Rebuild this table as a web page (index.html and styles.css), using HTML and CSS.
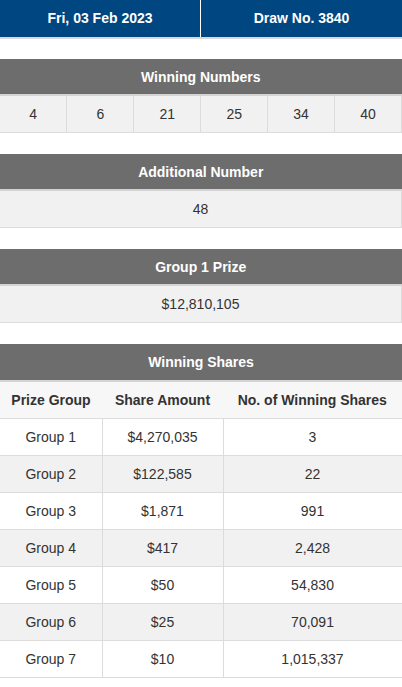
FILE: index.html
```html
<!DOCTYPE html>
<html>
<head>
<meta charset="utf-8">
<link rel="stylesheet" href="styles.css">
</head>
<body>
<div class="drawbar">
  <div class="drawcell">Fri, 03 Feb 2023</div>
  <div class="drawcell">Draw No. 3840</div>
</div>

<table class="tbl first">
  <thead><tr><th colspan="6" class="sec">Winning Numbers</th></tr></thead>
  <tbody>
    <tr class="grey">
      <td class="num">4</td><td class="num">6</td><td class="num">21</td><td class="num">25</td><td class="num">34</td><td class="num">40</td>
    </tr>
  </tbody>
</table>

<table class="tbl">
  <thead><tr><th class="sec">Additional Number</th></tr></thead>
  <tbody><tr class="grey"><td>48</td></tr></tbody>
</table>

<table class="tbl">
  <thead><tr><th class="sec">Group 1 Prize</th></tr></thead>
  <tbody><tr class="grey"><td>$12,810,105</td></tr></tbody>
</table>

<table class="tbl shares">
  <colgroup><col class="c1"><col class="c2"><col class="c3"></colgroup>
  <thead>
    <tr><th colspan="3" class="sec">Winning Shares</th></tr>
    <tr class="colhead"><th>Prize Group</th><th>Share Amount</th><th>No. of Winning Shares</th></tr>
  </thead>
  <tbody>
    <tr><td>Group 1</td><td>$4,270,035</td><td>3</td></tr>
    <tr class="grey"><td>Group 2</td><td>$122,585</td><td>22</td></tr>
    <tr><td>Group 3</td><td>$1,871</td><td>991</td></tr>
    <tr class="grey"><td>Group 4</td><td>$417</td><td>2,428</td></tr>
    <tr><td>Group 5</td><td>$50</td><td>54,830</td></tr>
    <tr class="grey"><td>Group 6</td><td>$25</td><td>70,091</td></tr>
    <tr><td>Group 7</td><td>$10</td><td>1,015,337</td></tr>
  </tbody>
</table>
</body>
</html>
```

FILE: styles.css
```css
html, body {
  margin: 0;
  padding: 0;
  background: #fff;
}
body {
  font-family: "Liberation Sans", Arial, Helvetica, sans-serif;
  font-size: 14px;
  color: #333;
  width: 402px;
}
.drawbar {
  display: grid;
  grid-template-columns: 200px 201px;
  column-gap: 1px;
  background: #fff;
  border-bottom: 2px solid #d9d9d9;
}
.drawcell {
  background: #004680;
  color: #fff;
  font-weight: bold;
  text-align: center;
  height: 37px;
  line-height: 37px;
}
.tbl {
  width: 402px;
  border-collapse: collapse;
  table-layout: fixed;
  margin-top: 21px;
}
.tbl.first {
  margin-top: 20px;
}
.tbl th.sec {
  background: #6d6d6d;
  color: #fff;
  font-weight: bold;
  height: 35px;
  padding: 0;
  text-align: center;
  border-bottom: 2px solid #d4d4d4;
}
.shares th.sec {
  height: 36px;
}
.tbl td {
  height: 36px;
  padding: 0;
  text-align: center;
  border-bottom: 1px solid #dcdcdc;
  border-right: 1px solid #dcdcdc;
  background: #fff;
}
.tbl tr.grey td {
  background: #f1f1f1;
}
.shares .c1 { width: 102px; }
.shares .c2 { width: 121px; }
.shares .c3 { width: 179px; }
.shares .colhead th {
  background: #f7f7f7;
  color: #333;
  font-weight: bold;
  height: 36px;
  padding: 0;
  text-align: center;
  border-bottom: 1px solid #dcdcdc;
}
.shares .colhead th:last-child {
  border-right: 1px solid #dcdcdc;
}
```
